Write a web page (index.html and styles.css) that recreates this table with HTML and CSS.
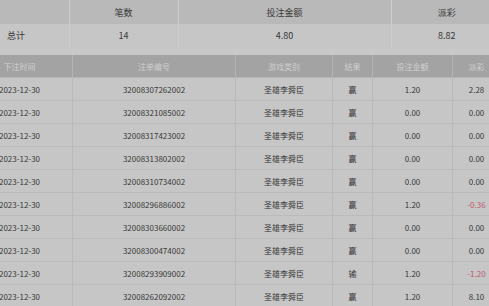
FILE: index.html
```html
<!DOCTYPE html>
<html lang="zh">
<head>
<meta charset="utf-8">
<link rel="stylesheet" href="styles.css">
</head>
<body>
<div class="page">
  <table class="summary">
    <colgroup><col class="s1"><col class="s2"><col class="s3"><col class="s4"></colgroup>
    <thead>
      <tr><th></th><th>笔数</th><th>投注金额</th><th>派彩</th></tr>
    </thead>
    <tbody>
      <tr><td class="label">总计</td><td>14</td><td>4.80</td><td>8.82</td></tr>
    </tbody>
  </table>
  <div class="scroller">
    <table class="records">
      <colgroup><col class="c1"><col class="c2"><col class="c3"><col class="c4"><col class="c5"><col class="c6"></colgroup>
      <thead>
        <tr><th>下注时间</th><th>注单编号</th><th>游戏类别</th><th>结果</th><th>投注金额</th><th>派彩</th></tr>
      </thead>
      <tbody>
        <tr><td>2023-12-30</td><td>32008307262002</td><td>圣雄李舜臣</td><td>赢</td><td>1.20</td><td>2.28</td></tr>
        <tr><td>2023-12-30</td><td>32008321085002</td><td>圣雄李舜臣</td><td>赢</td><td>0.00</td><td>0.00</td></tr>
        <tr><td>2023-12-30</td><td>32008317423002</td><td>圣雄李舜臣</td><td>赢</td><td>0.00</td><td>0.00</td></tr>
        <tr><td>2023-12-30</td><td>32008313802002</td><td>圣雄李舜臣</td><td>赢</td><td>0.00</td><td>0.00</td></tr>
        <tr><td>2023-12-30</td><td>32008310734002</td><td>圣雄李舜臣</td><td>赢</td><td>0.00</td><td>0.00</td></tr>
        <tr><td>2023-12-30</td><td>32008296886002</td><td>圣雄李舜臣</td><td>赢</td><td>1.20</td><td class="neg">-0.36</td></tr>
        <tr><td>2023-12-30</td><td>32008303660002</td><td>圣雄李舜臣</td><td>赢</td><td>0.00</td><td>0.00</td></tr>
        <tr><td>2023-12-30</td><td>32008300474002</td><td>圣雄李舜臣</td><td>赢</td><td>0.00</td><td>0.00</td></tr>
        <tr><td>2023-12-30</td><td>32008293909002</td><td>圣雄李舜臣</td><td>输</td><td>1.20</td><td class="neg">-1.20</td></tr>
        <tr><td>2023-12-30</td><td>32008262092002</td><td>圣雄李舜臣</td><td>赢</td><td>1.20</td><td>8.10</td></tr>
      </tbody>
    </table>
  </div>
</div>
</body>
</html>
```
FILE: styles.css
```css
html, body {
  margin: 0;
  padding: 0;
  background: #c8c8c8;
  overflow: hidden;
}
.page {
  width: 489px;
  height: 306px;
  overflow: hidden;
  font-family: "Noto Sans CJK SC", "Noto Sans", sans-serif;
  color: #383838;
  background: #c8c8c8;
}
table {
  border-collapse: collapse;
  table-layout: fixed;
}
.summary {
  width: 502px;
  font-size: 9px;
  margin-bottom: 8px;
}
.summary .s1 { width: 69px; }
.summary .s2 { width: 109px; }
.summary .s3 { width: 213px; }
.summary .s4 { width: 111px; }
.summary th {
  height: 24px;
  padding: 0;
  font-weight: normal;
  background: #b9b9b9;
  border-left: 1px solid #cdcdcd;
  text-align: center;
  vertical-align: middle;
}
.summary td {
  height: 23px;
  padding: 0;
  background: #c6c6c6;
  border-left: 1px solid #cdcdcd;
  text-align: center;
  vertical-align: middle;
}
.summary th:first-child, .summary td:first-child { border-left: none; }
.summary td.label {
  text-align: left;
  padding-left: 7px;
}
.scroller {
  width: 489px;
  overflow: hidden;
}
.records {
  width: 534px;
  margin-left: -34px;
  font-size: 8px;
}
.records .c1 { width: 106px; }
.records .c2 { width: 163px; }
.records .c3 { width: 97px; }
.records .c4 { width: 40px; }
.records .c5 { width: 80px; }
.records .c6 { width: 48px; }
.records th {
  height: 22px;
  padding: 0;
  font-weight: normal;
  color: #cfcfcf;
  background: #a3a3a3;
  border: 1px solid #b4b4b4;
  border-top: none;
  text-align: center;
  vertical-align: middle;
}
.records td {
  height: 22px;
  padding: 0;
  background: #c6c6c6;
  border: 1px solid #bbbbbb;
  text-align: center;
  vertical-align: middle;
}
.records td.neg { color: #c25a6c; }
```
